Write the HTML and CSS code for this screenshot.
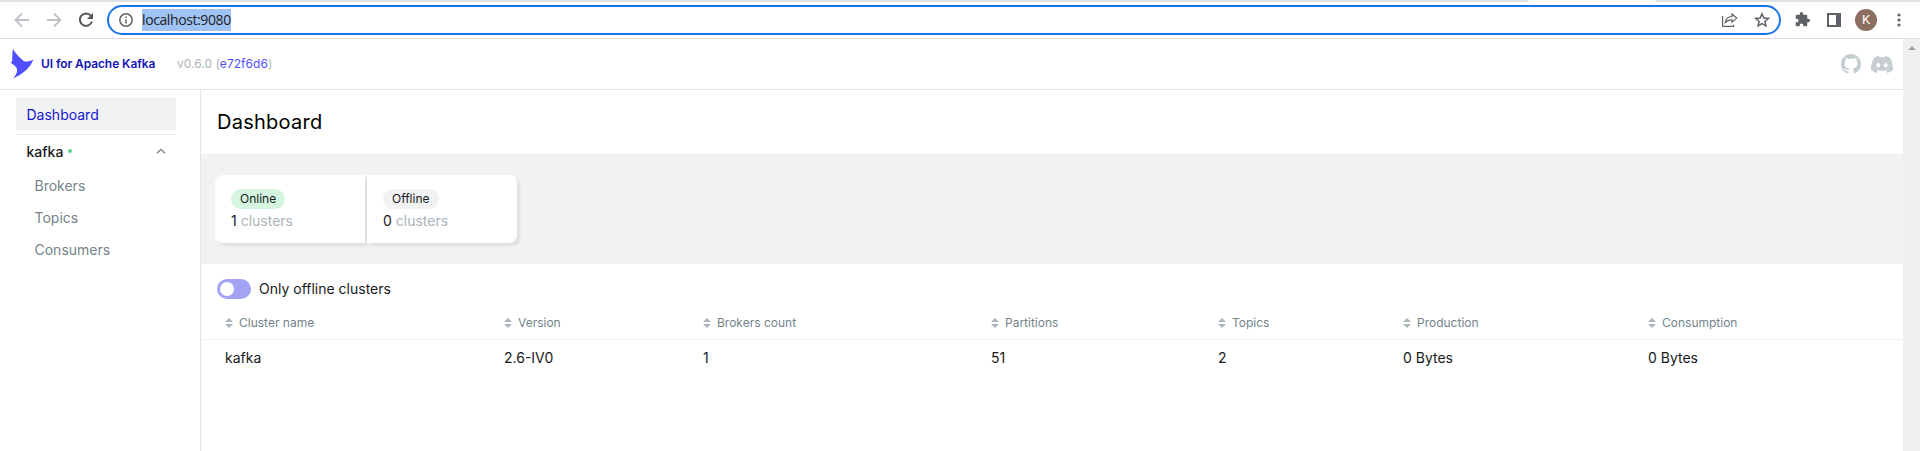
FILE: index.html
```html
<!DOCTYPE html>
<html lang="en">
<head>
<meta charset="utf-8">
<title>UI for Apache Kafka</title>
<link rel="stylesheet" href="styles.css">
</head>
<body>
<div class="tabstrip"><div class="tabs-left"></div><div class="tabs-right"></div></div>
<div class="toolbar">
  <svg class="nav" width="16" height="16" viewBox="0 0 16 16"><path d="M15 8H2M8 1.5 1.5 8 8 14.5" fill="none" stroke="#bdc1c6" stroke-width="1.8"/></svg>
  <svg class="nav" width="16" height="16" viewBox="0 0 16 16"><path d="M1 8h13M8 1.5 14.500 8 8 14.500" fill="none" stroke="#bdc1c6" stroke-width="1.8"/></svg>
  <svg class="nav reload" width="16" height="16" viewBox="0 0 16 16"><path d="M12.900 3.700A6.200 6.200 0 1 0 14 9.500" fill="none" stroke="#54585c" stroke-width="2"/><path d="M15 1v6H9z" fill="#54585c"/></svg>
  <div class="omnibox">
    <svg width="14" height="14" viewBox="0 0 14 14"><circle cx="7" cy="7" r="6.200" fill="none" stroke="#5f6368" stroke-width="1.500"/><path d="M6.250 6.200h1.500v4.300h-1.500zM6.250 3.500h1.500V5h-1.500z" fill="#5f6368"/></svg>
    <span class="url">localhost:9080</span>
    <svg class="share" width="16" height="14" viewBox="0 0 16 14"><path d="M.6 3v10.400h11V11.800M10 1v2.500C5.500 3.700 3.700 6 3.300 9.600 5 7.600 7 6.800 10 6.800v2.400l4.700-4.100z" fill="none" stroke="#5f6368" stroke-width="1.200"/></svg>
    <svg class="star" width="16" height="16" viewBox="0 0 16 16"><path d="m8 1.800 1.800 4.200 4.500.4-3.400 3 1 4.400L8 11.500l-3.900 2.300 1-4.400-3.400-3 4.500-.4z" fill="none" stroke="#5f6368" stroke-width="1.500"/></svg>
  </div>
  <svg class="puzzle" width="15" height="15" viewBox="1 1 22 22"><path d="M20.500 11H19V7c0-1.100-.9-2-2-2h-4V3.500a2.500 2.500 0 0 0-5 0V5H4c-1.100 0-2 .9-2 2v3.800h1.500a2.700 2.700 0 0 1 0 5.400H2V20c0 1.100.9 2 2 2h3.800v-1.500a2.700 2.700 0 0 1 5.400 0V22H17c1.100 0 2-.9 2-2v-4h1.500a2.500 2.500 0 0 0 0-5z" fill="#5f6368"/></svg>
  <svg class="panel" width="14" height="14" viewBox="0 0 14 14"><path d="M0 0h14v14H0zM2 2v10h7V2z" fill="#5f6368" fill-rule="evenodd"/></svg>
  <div class="avatar">K</div>
  <svg class="dots" width="4" height="14" viewBox="0 0 4 14"><g fill="#5f6368"><circle cx="2" cy="2" r="1.600"/><circle cx="2" cy="7" r="1.600"/><circle cx="2" cy="12" r="1.600"/></g></svg>
</div>
<div class="viewport">
  <div class="app">
    <header class="header">
      <svg class="logo" width="24" height="30" viewBox="0 0 24 30"><path d="M3 0Q7 7 14 12.200 19 13.200 23.500 10.500 19 22.500 3 29.500 7.500 24.500 7 20.500 6.500 17 .8 14 3 12 2.200 9.500 2.200 5 3 0z" fill="#4f4fff"/></svg>
      <span class="brand">UI for Apache Kafka</span>
      <span class="version">v0.6.0 (<a>e72f6d6</a>)</span>
      <div class="social">
        <svg width="20" height="20" viewBox="0 0 16 16"><path fill="#c7ced1" d="M8 0C3.580 0 0 3.580 0 8c0 3.540 2.290 6.530 5.470 7.590.4.070.55-.17.55-.38 0-.19-.01-.82-.01-1.490-2.010.37-2.530-.49-2.690-.94-.09-.23-.48-.94-.82-1.130-.28-.15-.68-.52-.01-.53.63-.01 1.080.58 1.230.82.72 1.210 1.870.87 2.330.66.070-.52.28-.87.510-1.070-1.780-.2-3.640-.89-3.640-3.950 0-.87.310-1.590.82-2.150-.08-.2-.36-1.020.08-2.120 0 0 .67-.21 2.200.82.64-.18 1.320-.27 2-.27s1.360.09 2 .27c1.530-1.040 2.200-.82 2.200-.82.44 1.100.16 1.920.08 2.120.51.56.82 1.270.82 2.150 0 3.070-1.870 3.750-3.650 3.950.29.25.54.73.54 1.480 0 1.070-.01 1.930-.01 2.200 0 .21.15.46.55.38A8.010 8.010 0 0 0 16 8c0-4.420-3.580-8-8-8z"/></svg>
        <svg width="22" height="17" viewBox="0 0 22 17"><path fill="#c7ced1" fill-rule="evenodd" d="M18.600 1.400A18 18 0 0 0 14.100 0l-.6 1.200a17 17 0 0 0-5 0L7.900 0a18 18 0 0 0-4.500 1.400C.5 5.700-.2 9.900.1 14.100a18 18 0 0 0 5.500 2.800l1.200-1.900-1.900-.9.500-.4a13 13 0 0 0 11.200 0l.5.400-1.900.9 1.200 1.900a18 18 0 0 0 5.500-2.800c.4-4.900-.8-9.100-3.300-12.700zM7.300 11.500c-1.100 0-2-1-2-2.200s.9-2.300 2-2.300 2 1 2 2.300-.9 2.200-2 2.200zm7.400 0c-1.100 0-2-1-2-2.200s.9-2.300 2-2.300 2 1 2 2.300-.9 2.200-2 2.200z"/></svg>
      </div>
    </header>
    <div class="body">
      <nav class="sidebar">
        <div class="menu-item active">Dashboard</div>
        <hr class="divider">
        <div class="cluster">kafka<i class="status"></i><svg width="10" height="6" viewBox="0 0 10 6"><path d="m1 5.300 4-4 4 4" fill="none" stroke="#73848c" stroke-width="1.300"/></svg></div>
        <div class="sub-item">Brokers</div>
        <div class="sub-item">Topics</div>
        <div class="sub-item">Consumers</div>
      </nav>
      <main class="main">
        <h1 class="title">Dashboard</h1>
        <section class="metrics">
          <div class="card first"><span class="badge online">Online</span><div class="count">1 <span>clusters</span></div></div>
          <div class="card last"><span class="badge">Offline</span><div class="count">0 <span>clusters</span></div></div>
        </section>
        <div class="filter"><span class="switch"><i></i></span>Only offline clusters</div>
        <table class="table">
          <colgroup><col class="c1"><col class="c2"><col class="c3"><col class="c4"><col class="c5"><col class="c6"><col></colgroup>
          <thead><tr>
            <th><span><i class="sort"></i>Cluster name</span></th><th><span><i class="sort"></i>Version</span></th><th><span><i class="sort"></i>Brokers count</span></th><th><span><i class="sort"></i>Partitions</span></th><th><span><i class="sort"></i>Topics</span></th><th><span><i class="sort"></i>Production</span></th><th><span><i class="sort"></i>Consumption</span></th>
          </tr></thead>
          <tbody><tr><td>kafka</td><td>2.6-IV0</td><td>1</td><td>51</td><td>2</td><td>0 Bytes</td><td>0 Bytes</td></tr></tbody>
        </table>
      </main>
    </div>
  </div>
  <div class="scrollbar"><svg width="8" height="4" viewBox="0 0 8 4"><path d="M4 0 8 4H0z" fill="#a3a3a3"/></svg></div>
</div>
</body>
</html>
```
FILE: styles.css
```css
* { box-sizing: border-box; }
body { margin: 0; height: 451px; overflow: hidden; display: flex; flex-direction: column; background: #fff; font-family: Inter, "Liberation Sans", sans-serif; font-size: 14px; color: #171a1c; }
svg { display: block; flex: none; }

.tabstrip { height: 2px; flex: none; display: flex; justify-content: space-between; }
.tabs-left { width: 1529px; background: #dee1e6; border-bottom-right-radius: 4px 2px; }
.tabs-right { width: 265px; background: #dee1e6; border-bottom-left-radius: 4px 2px; }

.toolbar { height: 37px; flex: none; display: flex; align-items: center; padding: 0 18px 1px 14px; border-bottom: 1px solid #dadce0; }
.nav { margin-right: 16px; }
.reload { margin-right: 13px; }
.omnibox { width: 1674px; height: 30px; flex: none; display: flex; align-items: center; padding: 0 9px 0 10px; border: 2px solid #1a73e8; border-radius: 15px; }
.url { height: 22px; margin-left: 9px; background: #9fc3f5; color: #202124; font: 14px/22px "Open Sans", "Noto Sans", sans-serif; letter-spacing: -.4px; }
.share { margin-left: auto; }
.star { margin-left: 16px; }
.puzzle { margin-left: 14px; }
.panel { margin-left: 17px; }
.avatar { width: 22px; height: 22px; margin-left: 14px; border-radius: 50%; background: #8d6e63; color: #fff; font: 13px/22px Roboto, sans-serif; text-align: center; }
.dots { margin-left: 20px; }

.viewport { flex: 1; display: flex; min-height: 0; }
.app { flex: 1; display: flex; flex-direction: column; }
.scrollbar { width: 17px; padding: 7px 0 0 5px; background: #f0f0f0; }

.header { height: 51px; flex: none; display: flex; align-items: center; padding: 0 10px; border-bottom: 1px solid #e3e6e8; }
.brand { width: 114px; margin-left: 7px; color: #1414b8; font-size: 12px; font-weight: 600; line-height: 16px; letter-spacing: -.09px; white-space: nowrap; }
.version { margin-left: 22px; color: #abb5ba; font-size: 12px; letter-spacing: .04px; }
.brand, .version { padding-bottom: 1px; }
.version a { color: #4f4fff; }
.social { margin-left: auto; display: flex; align-items: center; gap: 10px; }

.body { flex: 1; display: flex; }
.sidebar { width: 201px; padding: 8px 24px 0 16px; border-right: 1px solid #e3e6e8; }
.menu-item { height: 32px; padding-left: 10.5px; line-height: 34px; }
.active { background: #f1f2f3; color: #1717cf; }
.divider { height: 1px; margin: 4px 0 0; border: 0; background: #e9ebed; }
.cluster { height: 32px; display: flex; align-items: center; padding: 0 10px 0 10.5px; font-weight: 450; }
.cluster svg { margin-left: auto; }
.status { width: 4px; height: 4px; margin-left: 5px; border-radius: 50%; background: #5cd685; }
.sub-item { height: 32px; padding-left: 18.5px; line-height: 32px; color: #73848c; }
.cluster + .sub-item { margin-top: 3px; }

.main { flex: 1; }
.title { height: 64px; margin: 0; padding-left: 16px; font-size: 20px; font-weight: 400; line-height: 64px; letter-spacing: .25px; color: #000; }
.metrics { height: 110px; display: flex; gap: 2px; padding: 21px 14px; background: #f1f2f3; }
.card { width: 150px; height: 68px; padding: 14px 16px 0; background: #fff; box-shadow: 3px 3px 3px rgba(0,0,0,.08); }
.first { border-radius: 8px 0 0 8px; }
.last { border-radius: 0 8px 8px 0; }
.badge { display: block; width: fit-content; height: 20px; padding: 0 9px; border-radius: 10px; background: #f1f2f3; font-size: 12px; line-height: 20px; }
.online { background: #d6f5e0; }
.count { line-height: 24px; }
.count span { color: #abb5ba; }
.filter { display: flex; align-items: center; height: 20px; margin: 15px 0 0 16px; gap: 8px; line-height: 18px; }
.switch { width: 34px; height: 20px; padding: 3px; border-radius: 10px; background: #a3a3f5; }
.switch i { display: block; width: 14px; height: 14px; border-radius: 50%; background: #fff; }
.table { width: 100%; margin-top: 8px; border-collapse: separate; border-spacing: 0; table-layout: fixed; }
.c1 { width: 295px; }
.c2 { width: 199px; }
.c3 { width: 288px; }
.c4 { width: 227px; }
.c5 { width: 185px; }
.c6 { width: 245px; }
.table th, .table td { padding: 0 0 0 8px; text-align: left; font-weight: 400; }
.table th:first-child, .table td:first-child { padding-left: 24px; }
.table th { height: 33px; border-bottom: 1px solid #f1f2f3; font-size: 12px; color: #73848c; }
.table th span { display: flex; align-items: center; height: 14px; gap: 6px; line-height: 12px; }
.table td { height: 35px; line-height: 17px; padding-bottom: 1px; }
.table td:first-child { padding-bottom: 1px; }
.sort { display: grid; width: 8px; gap: 2px; }
.sort::before, .sort::after { content: ""; height: 4px; background: #abb5ba; }
.sort::before { clip-path: polygon(50% 0, 100% 100%, 0 100%); }
.sort::after { clip-path: polygon(0 0, 100% 0, 50% 100%); }
```
